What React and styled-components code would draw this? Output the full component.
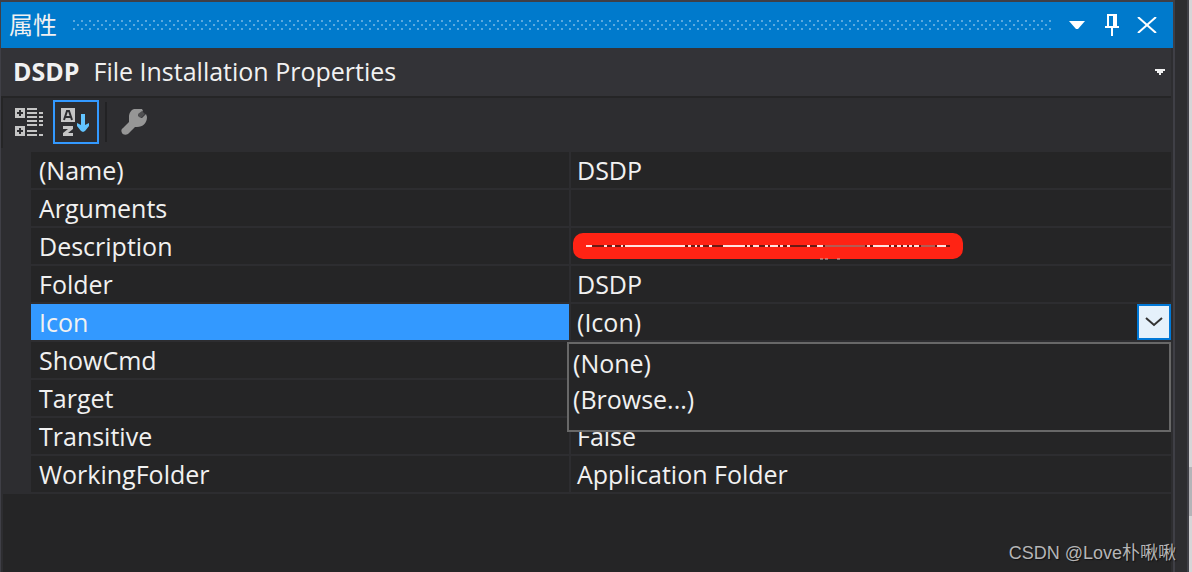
import React, { useState } from "react";
import styled, { createGlobalStyle } from "styled-components";

const GlobalStyle = createGlobalStyle`
  * { box-sizing: border-box; }
  body {
    margin: 0;
    background: #2d2d30;
    color: #f1f1f1;
    font-family: "Open Sans", "Noto Sans CJK SC", sans-serif;
    font-size: 25px;
    line-height: 36px;
  }
  button { font: inherit; color: inherit; border: 0; padding: 0; background: none; }
  svg { display: block; }
`;

const Shell = styled.div`
  position: relative;
  display: flex;
  min-height: 100vh;
  overflow: hidden;
`;

const Panel = styled.section`
  flex: 1;
  min-width: 0;
  display: flex;
  flex-direction: column;
  border-top: 2px solid #3f3f46;
  border-left: 1px solid #3f3f46;
`;

const Gutter = styled.div`
  width: 16px;
  border: solid #3f3f46;
  border-width: 0 2px;
`;

const Scroller = styled.div`
  width: 3px;
  padding-top: 467px;
  background: #d6d6d8;
`;

const Thumb = styled.div`
  height: 49px;
  background: #b4b4b8;
`;

const TitleBar = styled.header`
  display: flex;
  align-items: center;
  height: 46px;
  padding: 0 9px 0 8px;
  background: #007acc;
`;

const Title = styled.h1`
  margin: 0;
  font-size: 24px;
  font-weight: 400;
  line-height: 36px;
`;

const Grip = styled.svg`
  flex: 1;
  height: 10px;
  margin: 0 8px 0 16px;
`;

const TitleButton = styled.button`
  display: flex;
  align-items: center;
  justify-content: center;
  width: 35px;
  height: 36px;
`;

const ObjectPicker = styled.button`
  display: flex;
  align-items: center;
  gap: 14px;
  height: 48px;
  margin-right: 2px;
  padding: 0 6px 0 12px;
  background: #333337;
  text-align: left;

  strong, span { padding-bottom: 2px; }
  span { flex: 1; }
`;

const Toolbar = styled.div`
  display: flex;
  align-items: center;
  height: 52px;
  margin-right: 2px;
  padding: 0 4px 2px;
  border-top: 2px solid #252526;
  border-left: 2px solid #252526;
`;

const ToolButton = styled.button`
  display: flex;
  align-items: center;
  justify-content: center;
  width: 46px;
  height: 44px;
  border: 2px solid ${(p) => (p.$active ? "#3399ff" : "transparent")};
`;

const Divider = styled.div`
  width: 2px;
  height: 40px;
  margin: 0 4px 0 6px;
  background: #222224;
`;

const GridArea = styled.div`
  margin: 4px 2px 0 0;
  padding-left: 30px;
`;

const PropertyTable = styled.table`
  width: 100%;
  table-layout: fixed;
  border-collapse: separate;
  border-spacing: 0;
  background: #252526;
`;

const NameCell = styled.th`
  width: 47.37%;
  height: 38px;
  padding: 0 8px;
  border: solid #2d2d30;
  border-width: 0 2px 2px 0;
  background: ${(p) => (p.$selected ? "#3399ff" : "#252526")};
  background-clip: padding-box;
  font-weight: 400;
  text-align: left;
`;

const ValueCell = styled.td`
  position: relative;
  height: 38px;
  padding: 0 0 0 6px;
  border-bottom: 2px solid #2d2d30;
`;

const Editor = styled.div`
  display: flex;
  justify-content: space-between;
`;

const DropButton = styled.button`
  display: flex;
  align-items: center;
  justify-content: center;
  width: 34px;
  height: 36px;
  border: 2px solid #0078d7;
  background: #e5f1fb;
`;

const Options = styled.div`
  position: absolute;
  z-index: 1;
  top: 38px;
  left: -4px;
  right: 0;
  height: 90px;
  padding: 1px 4px;
  border: 2px solid #686868;
  background: #252526;
`;

const Option = styled.button`
  display: block;
  width: 100%;
  height: 36px;
  text-align: left;
`;

const Redaction = styled.svg`
  margin-left: -4px;
`;

const EmptyArea = styled.div`
  flex: 1;
  min-height: 70px;
  margin: 0 2px;
  background: #252526;
`;

const Watermark = styled.div`
  position: absolute;
  right: 16px;
  bottom: 6px;
  color: #b5b5b6;
  font-family: "Liberation Sans", "Noto Sans CJK SC", sans-serif;
  font-size: 18px;
  line-height: 26px;
  text-shadow: 1px 1px 1px #111;
`;

const rows = [
  ["(Name)", "DSDP"],
  ["Arguments", ""],
  ["Description", null],
  ["Folder", "DSDP"],
  ["Icon", "(Icon)"],
  ["ShowCmd", ""],
  ["Target", ""],
  ["Transitive", "False"],
  ["WorkingFolder", "Application Folder"],
];

const streaks = [
  [13, 6], [31, 3], [39, 3], [48, 2], [52, 60], [115, 3], [122, 2], [127, 3],
  [136, 3], [150, 22], [174, 3], [180, 6], [192, 3], [197, 8], [207, 3],
  [214, 3], [234, 3], [244, 6], [294, 3], [300, 16], [318, 3], [324, 4],
  [330, 4], [336, 3], [341, 5], [364, 9],
];

function GripDots() {
  return (
    <Grip aria-hidden="true">
      <defs>
        <pattern id="grip" width="8" height="8" patternUnits="userSpaceOnUse">
          <path d="M0 0h2v2H0zM4 4h2v2H4z" fill="#59a9df" />
        </pattern>
      </defs>
      <rect width="100%" height="10" fill="url(#grip)" />
    </Grip>
  );
}

function CategorizedIcon() {
  return (
    <svg width="30" height="28" viewBox="0 0 30 28" fill="#c5c5c5" shapeRendering="crispEdges">
      <path fillRule="evenodd" d="M0 0h10v10H0zM4 2v2H2v2h2v2h2V6h2V4H6V2zM0 18h10v10H0zM4 20v2H2v2h2v2h2v-2h2v-2H6v-2z" />
      <path d="M12 0h10v2H12zM12 4h10v2H12zM12 8h10v2H12zM12 12h10v2H12zM12 16h10v2H12zM12 22h10v2H12zM12 26h6v2h-6zM18 26h4v2h-4zM24 4h4v2h-4zM24 8h4v2h-4zM24 12h4v2h-4zM24 16h4v2h-4zM24 26h4v2h-4z" />
    </svg>
  );
}

function AlphabeticalIcon() {
  return (
    <svg width="30" height="30" viewBox="0 0 30 30">
      <path fill="#c5c5c5" d="M0 1h14v14H0z" />
      <path d="M3 13l3-9h2l3 9M4 10h6" fill="none" stroke="#2d2d30" strokeWidth="2" />
      <path fill="#c5c5c5" d="M2 19h10v3l-5 4h5v3H2v-3l5-4H2z" />
      <path d="M20 7h4v11l4-2v3l-4 5-2 1-2-1-4-5v-3l4 2z" fill="#62c4ff" />
    </svg>
  );
}

function WrenchIcon() {
  return (
    <svg width="30" height="28" viewBox="0 0 30 28">
      <path
        fill="#969696"
        d="M15 1h8l1 2-5 4 1 2 3 1 4-4 1 3c0 6-4 10-10 10h-2l-7 7c-2 1-5 1-6-1s-1-4 1-5l6-6V9c0-4 2-7 5-8z"
      />
      <path fill="#505052" d="M19 6l4-3 3 3-3 3h-3z" />
    </svg>
  );
}

export default function App() {
  const [icon, setIcon] = useState("(Icon)");
  const [open, setOpen] = useState(true);

  const choose = (value) => {
    setIcon(value);
    setOpen(false);
  };

  return (
    <>
      <GlobalStyle />
      <Shell>
        <Panel aria-label="属性">
          <TitleBar>
            <Title>属性</Title>
            <GripDots />
            <TitleButton aria-label="Window position">
              <svg width="16" height="8"><path d="M0 0h16l-7 8H7z" fill="#fff" /></svg>
            </TitleButton>
            <TitleButton aria-label="Auto hide">
              <svg width="14" height="22" shapeRendering="crispEdges">
                <path fillRule="evenodd" d="M2 0h10v12h2v2H8v8H6v-8H0v-2h2zM4 2v10h4V2z" fill="#fff" />
              </svg>
            </TitleButton>
            <TitleButton aria-label="Close">
              <svg width="20" height="16"><path d="M1 0l18 16M19 0L1 16" stroke="#fff" strokeWidth="2" /></svg>
            </TitleButton>
          </TitleBar>

          <ObjectPicker>
            <strong>DSDP</strong>
            <span>File Installation Properties</span>
            <svg width="10" height="6" shapeRendering="crispEdges">
              <path d="M0 0h10v2H8v2H6v2H4V4H2V2H0z" fill="#f1f1f1" />
            </svg>
          </ObjectPicker>

          <Toolbar role="toolbar">
            <ToolButton aria-label="Categorized"><CategorizedIcon /></ToolButton>
            <ToolButton aria-label="Alphabetical" $active><AlphabeticalIcon /></ToolButton>
            <Divider />
            <ToolButton aria-label="Property pages" disabled><WrenchIcon /></ToolButton>
          </Toolbar>

          <GridArea>
            <PropertyTable>
              <tbody>
                {rows.map(([name, value]) => (
                  <tr key={name}>
                    <NameCell scope="row" $selected={name === "Icon"}>{name}</NameCell>
                    <ValueCell>
                      {name === "Icon" ? (
                        <>
                          <Editor>
                            {icon}
                            <DropButton aria-label="Icon choices" aria-expanded={open} onClick={() => setOpen(!open)}>
                              <svg width="18" height="10">
                                <path d="M1 1l8 7 8-7" fill="none" stroke="#333" strokeWidth="2" />
                              </svg>
                            </DropButton>
                          </Editor>
                          {open && (
                            <Options role="listbox" aria-label="Icon">
                              <Option role="option" onClick={() => choose("(None)")}>(None)</Option>
                              <Option role="option" onClick={() => choose("(Browse...)")}>(Browse...)</Option>
                            </Options>
                          )}
                        </>
                      ) : value === null ? (
                        <Redaction width="390" height="27" aria-hidden="true">
                          <rect width="390" height="26" rx="10" fill="#ff2314" />
                          <path d="M13 12h364v2H13z" fill="#6b1a14" />
                          {streaks.map(([x, w]) => (
                            <rect key={x} x={x} y="12" width={w} height="2" fill="#ffe3e0" />
                          ))}
                          <path d="M252 13h16M268 13h24M348 13h14" stroke="#ff9c90" />
                          <path d="M247 26h3M252 26h3M264 26h3" stroke="#c8b8b0" />
                        </Redaction>
                      ) : (
                        value
                      )}
                    </ValueCell>
                  </tr>
                ))}
              </tbody>
            </PropertyTable>
          </GridArea>
          <EmptyArea />
        </Panel>
        <Gutter />
        <Scroller><Thumb /></Scroller>
        <Watermark>CSDN @Love朴啾啾</Watermark>
      </Shell>
    </>
  );
}
